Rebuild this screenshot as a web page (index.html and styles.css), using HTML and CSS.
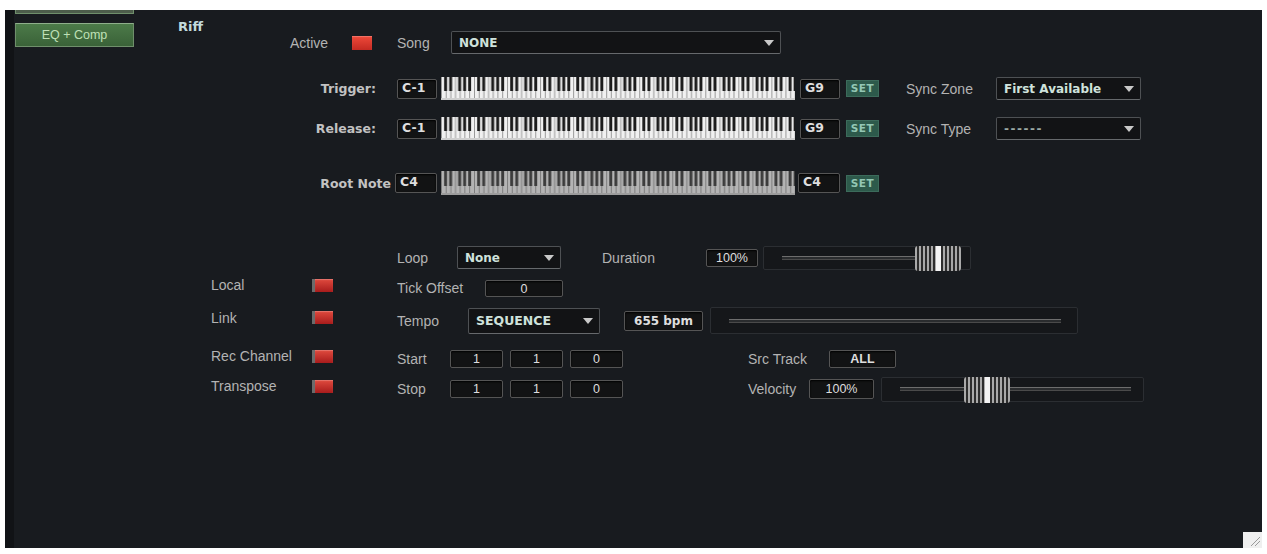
FILE: index.html
```html
<!DOCTYPE html>
<html>
<head>
<meta charset="utf-8">
<title>Riff</title>
<link rel="stylesheet" href="styles.css">
</head>
<body>
<div class="window">
  <div class="sidebar">
    <div class="tab tab-cut"></div>
    <div class="tab">EQ + Comp</div>
  </div>
  <div class="main">
    <div class="head">
      <div class="title">Riff</div>
      <div class="row">
        <span class="lbl w-active">Active</span>
        <span class="led led-big"></span>
        <span class="lbl w-song">Song</span>
        <div class="select w-song-sel"><span>NONE</span><i class="arrow"></i></div>
      </div>
    </div>

    <div class="row krow r-trigger">
      <span class="klbl">Trigger:</span>
      <span class="box note">C-1</span>
      <svg class="kbd" viewBox="0 0 75 23" preserveAspectRatio="none">
        <defs>
          <pattern id="oct-a" width="7" height="23" patternUnits="userSpaceOnUse">
            <rect width="7" height="23" fill="#f1f1f1"/>
            <rect x="0" width="0.16" height="23" fill="#7d7d7d"/>
            <rect x="1" width="0.16" height="23" fill="#7d7d7d"/>
            <rect x="2" width="0.16" height="23" fill="#7d7d7d"/>
            <rect x="3" width="0.16" height="23" fill="#7d7d7d"/>
            <rect x="4" width="0.16" height="23" fill="#7d7d7d"/>
            <rect x="5" width="0.16" height="23" fill="#7d7d7d"/>
            <rect x="6" width="0.16" height="23" fill="#7d7d7d"/>
            <rect x="0.66" width="0.62" height="14" fill="#1b1b1b"/>
            <rect x="1.74" width="0.62" height="14" fill="#1b1b1b"/>
            <rect x="3.64" width="0.62" height="14" fill="#1b1b1b"/>
            <rect x="4.70" width="0.62" height="14" fill="#1b1b1b"/>
            <rect x="5.76" width="0.62" height="14" fill="#1b1b1b"/>
            <rect y="21" width="7" height="2" fill="#cfcfcf"/>
          </pattern>
        </defs>
        <rect width="75" height="23" fill="url(#oct-a)"/>
      </svg>
      <span class="box note n-right">G9</span>
      <span class="set">SET</span>
      <span class="lbl w-sync">Sync Zone</span>
      <div class="select w-sync-sel"><span>First Available</span><i class="arrow"></i></div>
    </div>

    <div class="row krow r-release">
      <span class="klbl">Release:</span>
      <span class="box note">C-1</span>
      <svg class="kbd" viewBox="0 0 75 23" preserveAspectRatio="none">
        <defs>
          <pattern id="oct-b" width="7" height="23" patternUnits="userSpaceOnUse">
            <rect width="7" height="23" fill="#f1f1f1"/>
            <rect x="0" width="0.16" height="23" fill="#7d7d7d"/>
            <rect x="1" width="0.16" height="23" fill="#7d7d7d"/>
            <rect x="2" width="0.16" height="23" fill="#7d7d7d"/>
            <rect x="3" width="0.16" height="23" fill="#7d7d7d"/>
            <rect x="4" width="0.16" height="23" fill="#7d7d7d"/>
            <rect x="5" width="0.16" height="23" fill="#7d7d7d"/>
            <rect x="6" width="0.16" height="23" fill="#7d7d7d"/>
            <rect x="0.66" width="0.62" height="14" fill="#1b1b1b"/>
            <rect x="1.74" width="0.62" height="14" fill="#1b1b1b"/>
            <rect x="3.64" width="0.62" height="14" fill="#1b1b1b"/>
            <rect x="4.70" width="0.62" height="14" fill="#1b1b1b"/>
            <rect x="5.76" width="0.62" height="14" fill="#1b1b1b"/>
            <rect y="21" width="7" height="2" fill="#cfcfcf"/>
          </pattern>
        </defs>
        <rect width="75" height="23" fill="url(#oct-b)"/>
      </svg>
      <span class="box note n-right">G9</span>
      <span class="set">SET</span>
      <span class="lbl w-sync">Sync Type</span>
      <div class="select w-sync-sel"><span class="dashes">------</span><i class="arrow"></i></div>
    </div>

    <div class="row krow r-root">
      <span class="klbl root-lbl">Root Note</span>
      <span class="box note">C4</span>
      <svg class="kbd kbd-off" viewBox="0 0 75 24" preserveAspectRatio="none">
        <defs>
          <pattern id="oct-c" width="7" height="24" patternUnits="userSpaceOnUse">
            <rect width="7" height="24" fill="#b4b4b4"/>
            <rect x="0" width="0.16" height="24" fill="#6a6a6a"/>
            <rect x="1" width="0.16" height="24" fill="#6a6a6a"/>
            <rect x="2" width="0.16" height="24" fill="#6a6a6a"/>
            <rect x="3" width="0.16" height="24" fill="#6a6a6a"/>
            <rect x="4" width="0.16" height="24" fill="#6a6a6a"/>
            <rect x="5" width="0.16" height="24" fill="#6a6a6a"/>
            <rect x="6" width="0.16" height="24" fill="#6a6a6a"/>
            <rect x="0.66" width="0.62" height="15" fill="#3c3c3c"/>
            <rect x="1.74" width="0.62" height="15" fill="#3c3c3c"/>
            <rect x="3.64" width="0.62" height="15" fill="#3c3c3c"/>
            <rect x="4.70" width="0.62" height="15" fill="#3c3c3c"/>
            <rect x="5.76" width="0.62" height="15" fill="#3c3c3c"/>
            <rect y="22" width="7" height="2" fill="#9c9c9c"/>
          </pattern>
        </defs>
        <rect width="75" height="24" fill="url(#oct-c)"/>
      </svg>
      <span class="box note n-right">C4</span>
      <span class="set">SET</span>
    </div>

    <div class="row r-loop">
      <span class="lbl w-loop">Loop</span>
      <div class="select w-loop-sel"><span>None</span><i class="arrow"></i></div>
      <span class="lbl w-dur">Duration</span>
      <span class="box w-dur-box">100%</span>
      <div class="slider w-dur-sl"><span class="track"></span><span class="thumb" style="left:151px"></span></div>
    </div>

    <div class="row r-b1">
      <div class="side"><span class="lbl w-side">Local</span><span class="led"></span></div>
      <span class="lbl w-tick">Tick Offset</span>
      <span class="box w-tick-box">0</span>
    </div>

    <div class="row r-b2">
      <div class="side"><span class="lbl w-side">Link</span><span class="led"></span></div>
      <span class="lbl w-tempo">Tempo</span>
      <div class="select w-tempo-sel"><span>SEQUENCE</span><i class="arrow"></i></div>
      <span class="box bpm">655 bpm</span>
      <div class="slider w-tempo-sl"><span class="track"></span></div>
    </div>

    <div class="row r-b3">
      <div class="side"><span class="lbl w-side">Rec Channel</span><span class="led"></span></div>
      <span class="lbl w-pos">Start</span>
      <span class="box pos">1</span>
      <span class="box pos">1</span>
      <span class="box pos">0</span>
      <span class="lbl w-src">Src Track</span>
      <span class="box w-all">ALL</span>
    </div>

    <div class="row r-b4">
      <div class="side"><span class="lbl w-side">Transpose</span><span class="led"></span></div>
      <span class="lbl w-pos">Stop</span>
      <span class="box pos">1</span>
      <span class="box pos">1</span>
      <span class="box pos">0</span>
      <span class="lbl w-vel">Velocity</span>
      <span class="box w-vel-box">100%</span>
      <div class="slider w-vel-sl"><span class="track"></span><span class="thumb" style="left:82px"></span></div>
    </div>
  </div>

  <div class="grip">
    <svg width="19" height="16" viewBox="0 0 19 16">
      <path d="M17 5 L8 14 M17 9 L12 14" stroke="#9a9a9a" stroke-width="1"/>
    </svg>
  </div>
</div>
</body>
</html>
```

FILE: styles.css
```css
body { margin: 0; background-color: white; }

.window
{
    position: relative;
    display: flex;
    width: 1257px;
    height: 538px;
    margin: 10px 0 0 5px;
    background: #181b1f;
    overflow: hidden;
    font-family: "Liberation Sans", Arial, sans-serif;
    font-size: 14px;
    color: #b3b3b3;
}

/* left column with the tabs */
.sidebar
{
    box-sizing: border-box;
    width: 135px;
    border-left: 9px solid #111316;
    padding-left: 1px;
}
.tab
{
    box-sizing: border-box;
    width: 119px;
    height: 24px;
    margin-top: 9px;
    background: linear-gradient(#4c7a49, #3a6238);
    border: 1px solid #6f8f6b;
    border-top-color: #8fae8b;
    color: #bfe0b6;
    font-size: 12.5px;
    line-height: 22px;
    text-align: center;
}
.tab-cut { margin-top: -20px; background: #4d5d4b; }

.main { flex: 1; }
.row { display: flex; align-items: center; }

.head { display: flex; height: 44px; padding-left: 38px; }
.head .row { align-self: flex-end; height: 23px; }
.title
{
    width: 112px;
    padding-top: 9px;
    font: bold 13px "DejaVu Sans", sans-serif;
    color: #c2dadd;
}

.lbl { white-space: nowrap; }
.w-active { width: 62px; }
.w-song { width: 54px; margin-left: 25px; }

/* led toggles */
.led
{
    box-sizing: border-box;
    width: 21px;
    height: 13px;
    border-left: 3px solid #6b6b6b;
    background: linear-gradient(#e04a3e, #a81c1c);
    box-shadow: inset 0 1px 1px rgba(255,255,255,0.25);
}
.led-big { width: 20px; height: 14px; border-left: none; background: linear-gradient(#ef4a3a, #c42a22); }

/* dropdowns */
.select
{
    box-sizing: border-box;
    display: flex;
    align-items: center;
    height: 23px;
    padding: 0 6px 0 7px;
    background: #121315;
    border: 1px solid #4e5154;
    border-bottom-color: #66696c;
    border-radius: 2px;
    font: bold 12px "DejaVu Sans", sans-serif;
    color: #cfe2dc;
}
.select span { flex: 1; white-space: nowrap; }
.arrow
{
    width: 0;
    height: 0;
    border-left: 5px solid transparent;
    border-right: 5px solid transparent;
    border-top: 6px solid #c9c9c9;
}
.w-song-sel { width: 330px; }
.w-sync-sel { width: 145px; }
.w-loop-sel { width: 104px; }
.w-tempo-sel { width: 132px; height: 26px; font-size: 12.5px; }
.dashes { letter-spacing: 1.5px; color: #9aa8a4; }

/* keyboard rows */
.krow { height: 23px; }
.r-trigger { margin-top: 23px; }
.r-release { margin-top: 17px; }
.r-root { margin-top: 31px; height: 24px; }
.klbl
{
    box-sizing: border-box;
    width: 257px;
    padding-right: 21px;
    text-align: right;
    font: bold 12.5px "DejaVu Sans", sans-serif;
    color: #c2c2c2;
}
.root-lbl { width: 255px; padding-right: 4px; }

.box
{
    box-sizing: border-box;
    height: 18px;
    background: #121314;
    border: 1px solid #555;
    border-radius: 2px;
    box-shadow: inset 0 1px 2px #000;
    font-size: 12.5px;
    line-height: 16px;
    text-align: center;
    color: #dedede;
}
.note
{
    width: 40px;
    height: 20px;
    padding-left: 4px;
    text-align: left;
    line-height: 18px;
    font: bold 12.5px "DejaVu Sans", sans-serif;
}
.r-root .note { width: 42px; }
.kbd { width: 354px; height: 23px; margin-left: 4px; }
.kbd-off { height: 24px; }
.n-right { margin-left: 5px; }
.r-root .n-right { margin-left: 3px; }

.set
{
    box-sizing: border-box;
    width: 33px;
    height: 17px;
    margin-left: 6px;
    background: #2d5a4b;
    border: 1px solid #3c6b5b;
    color: #93c7b4;
    font: bold 10.5px "DejaVu Sans", sans-serif;
    line-height: 15px;
    text-align: center;
    letter-spacing: 0.5px;
}
.w-sync { width: 90px; margin-left: 27px; }

/* lower section */
.r-loop { margin-top: 51px; height: 23px; padding-left: 257px; }
.w-loop { width: 60px; }
.w-dur { width: 104px; margin-left: 41px; }
.w-dur-box { width: 52px; height: 18px; }
.w-dur-sl { width: 208px; margin-left: 5px; }

.slider
{
    box-sizing: border-box;
    position: relative;
    display: flex;
    align-items: center;
    height: 24px;
    padding: 0 12px 0 18px;
    background: #15171a;
    border: 1px solid #2b2e32;
    border-radius: 2px;
}
.track
{
    flex: 1;
    height: 2px;
    border-top: 1px solid #6d6d6d;
    border-bottom: 1px solid #4a4a4a;
    background: #2a2c2e;
}
.thumb
{
    position: absolute;
    top: -1px;
    bottom: -2px;
    width: 46px;
    border-radius: 3px;
    background:
        linear-gradient(90deg, transparent 46%, #f4f4f4 46% 56%, transparent 56%),
        repeating-linear-gradient(90deg, #a9a9a9 0 2px, #2c2c2c 2px 4px);
}

.r-b1, .r-b2, .r-b3, .r-b4 { height: 24px; padding-left: 71px; }
.r-b1 { margin-top: 7px; }
.r-b2 { margin-top: 7px; height: 27px; }
.r-b3 { margin-top: 13px; }
.r-b4 { margin-top: 6px; }

.side { display: flex; align-items: center; width: 186px; margin-bottom: 6px; }
.w-side { width: 101px; }

.w-tick { width: 88px; }
.w-tick-box { width: 78px; height: 17px; }

.w-tempo { width: 71px; }
.bpm
{
    width: 79px;
    height: 20px;
    margin-left: 24px;
    font: bold 12px "DejaVu Sans", sans-serif;
    line-height: 18px;
}
.w-tempo-sl { width: 368px; height: 27px; margin-left: 7px; padding: 0 16px 0 18px; }

.w-pos { width: 53px; }
.pos { width: 53px; height: 18px; }
.pos + .pos { margin-left: 7px; }

.w-src { width: 81px; margin-left: 125px; }
.w-all { width: 67px; height: 18px; font-weight: bold; }
.w-vel { width: 61px; margin-left: 125px; }
.w-vel-box { width: 65px; height: 20px; line-height: 18px; }
.w-vel-sl { width: 263px; height: 25px; margin-left: 7px; }

/* resize corner */
.grip
{
    position: absolute;
    right: 0;
    bottom: 0;
    width: 19px;
    height: 16px;
    background: #efefef;
}
.grip svg { display: block; }
```
